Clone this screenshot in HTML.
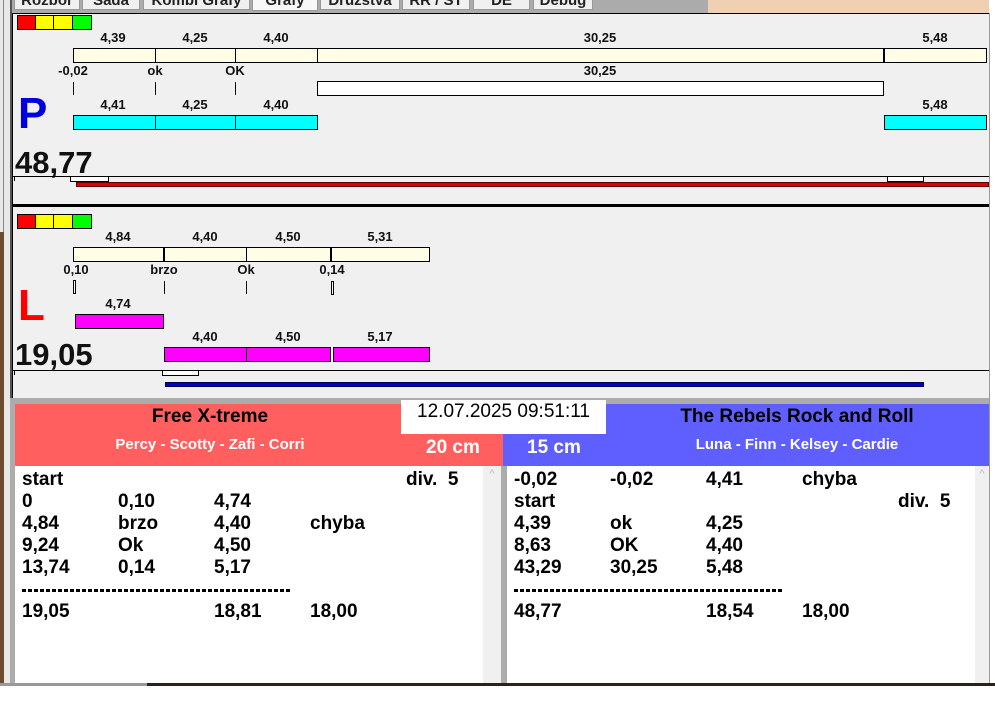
<!DOCTYPE html>
<html><head><meta charset="utf-8"><style>
*{margin:0;padding:0;box-sizing:border-box}
body{width:995px;height:701px;overflow:hidden;background:#fff;font-family:"Liberation Sans",Arial,sans-serif;position:relative}
div{position:absolute}
.t{font-weight:bold;font-size:13px;color:#111;white-space:nowrap;transform:translateX(-50%);line-height:14px}
.bar{border:1px solid #000;height:15px}
.cr{background:#fffde6}
.cy{background:#00ffff}
.mg{background:#ff00ff}
.tick{width:1px;height:13px;background:#000}
.tab{top:-2px;height:12px;background:#f0f0f0;border:1px solid #999;border-top:none;font-size:15px;font-weight:bold;line-height:6px;overflow:hidden;text-align:center;color:#222}
.row{font-size:19px;font-weight:bold;color:#000;line-height:22px;white-space:nowrap}
.dash{width:270px;height:3px;background:repeating-linear-gradient(90deg,#000 0 4px,transparent 4px 6px)}
</style></head><body>
<!-- left edge -->
<div style="left:0;top:0;width:12px;height:686px;background:#e8e8e8"></div>
<div style="left:3px;top:0;width:1px;height:686px;background:#888"></div>
<div style="left:10px;top:0;width:2px;height:400px;background:#555"></div>
<div style="left:0;top:232px;width:4px;height:451px;background:#6b4a30"></div>
<!-- tab strip -->
<div style="left:12px;top:0;width:696px;height:13px;background:#ababab"></div>
<div style="left:708px;top:0;width:281px;height:13px;background:#f0d0b2"></div>
<div class="tab" style="left:14px;width:66px">Rozbor</div>
<div class="tab" style="left:82px;width:58px">Sada</div>
<div class="tab" style="left:143px;width:107px">Kombi Grafy</div>
<div class="tab" style="left:252px;width:66px;height:13px;background:#f8f8f8">Grafy</div>
<div class="tab" style="left:320px;width:80px">Družstva</div>
<div class="tab" style="left:402px;width:68px">RR / ST</div>
<div class="tab" style="left:473px;width:57px">DE</div>
<div class="tab" style="left:533px;width:60px">Debug</div>
<!-- panel 1 -->
<div style="left:12px;top:13px;width:978px;height:385px;background:#f0f0f0;border-top:1px solid #000;border-right:1px solid #888"></div>
<div style="left:12px;top:13px;width:1px;height:385px;background:#000"></div>
<div style="left:17px;top:15px;width:19px;height:15px;background:#f00;border:1px solid #000"></div>
<div style="left:35px;top:15px;width:19px;height:15px;background:#ff0;border:1px solid #000"></div>
<div style="left:53px;top:15px;width:20px;height:15px;background:#ff0;border:1px solid #000"></div>
<div style="left:72px;top:15px;width:20px;height:15px;background:#0f0;border:1px solid #000"></div>

<div class="t" style="left:113px;top:31px">4,39</div>
<div class="t" style="left:195px;top:31px">4,25</div>
<div class="t" style="left:276px;top:31px">4,40</div>
<div class="t" style="left:600px;top:31px">30,25</div>
<div class="t" style="left:935px;top:31px">5,48</div>
<div class="bar cr" style="left:73px;top:48px;width:83px"></div>
<div class="bar cr" style="left:155px;top:48px;width:81px"></div>
<div class="bar cr" style="left:235px;top:48px;width:83px"></div>
<div class="bar cr" style="left:317px;top:48px;width:567px"></div>
<div style="left:883px;top:48px;width:2px;height:15px;background:#000"></div>
<div class="bar cr" style="left:884px;top:48px;width:103px"></div>
<div class="t" style="left:73px;top:64px">-0,02</div>
<div class="t" style="left:155px;top:64px">ok</div>
<div class="t" style="left:235px;top:64px">OK</div>
<div class="t" style="left:600px;top:64px">30,25</div>
<div class="tick" style="left:73px;top:82px"></div>
<div class="tick" style="left:155px;top:82px"></div>
<div class="tick" style="left:235px;top:82px"></div>
<div class="bar" style="left:317px;top:81px;width:567px;background:#fff"></div>
<div style="left:18px;top:89px;font-size:44px;font-weight:bold;color:#0000dd;line-height:50px">P</div>
<div class="t" style="left:113px;top:98px">4,41</div>
<div class="t" style="left:195px;top:98px">4,25</div>
<div class="t" style="left:276px;top:98px">4,40</div>
<div class="t" style="left:935px;top:98px">5,48</div>
<div class="bar cy" style="left:73px;top:115px;width:83px"></div>
<div class="bar cy" style="left:155px;top:115px;width:81px"></div>
<div class="bar cy" style="left:235px;top:115px;width:83px"></div>
<div class="bar cy" style="left:884px;top:115px;width:103px"></div>
<div style="left:15px;top:145px;font-size:31px;font-weight:bold;color:#111;line-height:36px">48,77</div>
<div style="left:13px;top:176px;width:976px;height:1px;background:#000"></div>
<div style="left:14px;top:177px;width:1px;height:4px;background:#000"></div>
<div style="left:70px;top:177px;width:39px;height:5px;background:#fff;border:1px solid #000;border-top:none"></div>
<div style="left:887px;top:177px;width:37px;height:5px;background:#fff;border:1px solid #000;border-top:none"></div>
<div style="left:76px;top:182px;width:913px;height:5px;background:#d00;border:1px solid #600"></div>
<div style="left:12px;top:204px;width:978px;height:3px;background:#000"></div>
<!-- panel 2 -->
<div style="left:17px;top:214px;width:19px;height:15px;background:#f00;border:1px solid #000"></div>
<div style="left:35px;top:214px;width:19px;height:15px;background:#ff0;border:1px solid #000"></div>
<div style="left:53px;top:214px;width:20px;height:15px;background:#ff0;border:1px solid #000"></div>
<div style="left:72px;top:214px;width:20px;height:15px;background:#0f0;border:1px solid #000"></div>
<div class="t" style="left:118px;top:230px">4,84</div>
<div class="t" style="left:205px;top:230px">4,40</div>
<div class="t" style="left:288px;top:230px">4,50</div>
<div class="t" style="left:380px;top:230px">5,31</div>
<div class="bar cr" style="left:73px;top:247px;width:92px"></div>
<div class="bar cr" style="left:163px;top:247px;width:84px"></div>
<div class="bar cr" style="left:246px;top:247px;width:85px"></div>
<div class="bar cr" style="left:330px;top:247px;width:100px"></div>
<div style="left:163px;top:247px;width:2px;height:15px;background:#000"></div>
<div style="left:330px;top:247px;width:2px;height:15px;background:#000"></div>
<div class="t" style="left:76px;top:263px">0,10</div>
<div class="t" style="left:164px;top:263px">brzo</div>
<div class="t" style="left:246px;top:263px">Ok</div>
<div class="t" style="left:332px;top:263px">0,14</div>
<div style="left:73px;top:280px;width:3px;height:14px;border:1px solid #000;background:#fff"></div>
<div class="tick" style="left:164px;top:281px"></div>
<div class="tick" style="left:246px;top:281px"></div>
<div style="left:331px;top:281px;width:3px;height:14px;border:1px solid #000;background:#fff"></div>
<div style="left:18px;top:281px;font-size:44px;font-weight:bold;color:#f00;line-height:50px">L</div>
<div class="t" style="left:118px;top:297px">4,74</div>
<div class="bar mg" style="left:75px;top:314px;width:89px"></div>
<div class="t" style="left:205px;top:330px">4,40</div>
<div class="t" style="left:288px;top:330px">4,50</div>
<div class="t" style="left:380px;top:330px">5,17</div>
<div class="bar mg" style="left:164px;top:347px;width:83px"></div>
<div class="bar mg" style="left:246px;top:347px;width:85px"></div>
<div class="bar mg" style="left:333px;top:347px;width:97px"></div>
<div style="left:15px;top:337px;font-size:31px;font-weight:bold;color:#111;line-height:36px">19,05</div>
<div style="left:13px;top:370px;width:976px;height:1px;background:#000"></div>
<div style="left:14px;top:371px;width:1px;height:4px;background:#000"></div>
<div style="left:162px;top:371px;width:37px;height:5px;background:#fff;border:1px solid #000;border-top:none"></div>
<div style="left:165px;top:382px;width:759px;height:5px;background:#0000cc;border:1px solid #000050"></div>
<!-- bottom -->
<div style="left:10px;top:398px;width:980px;height:288px;background:#acacac"></div>
<div style="left:15px;top:404px;width:488px;height:62px;background:#ff5f5f"></div>
<div style="left:503px;top:404px;width:486px;height:62px;background:#5f5fff"></div>
<div style="left:15px;top:406px;width:390px;text-align:center;font-size:19px;font-weight:bold;line-height:22px">Free X-treme</div>
<div style="left:15px;top:436px;width:390px;text-align:center;font-size:15px;font-weight:bold;color:#fff;line-height:18px">Percy - Scotty - Zafi - Corri</div>
<div style="left:605px;top:406px;width:384px;text-align:center;font-size:19px;font-weight:bold;line-height:22px">The Rebels Rock and Roll</div>
<div style="left:605px;top:436px;width:384px;text-align:center;font-size:15px;font-weight:bold;color:#fff;line-height:18px">Luna - Finn - Kelsey - Cardie</div>
<div style="left:401px;top:400px;width:205px;height:34px;background:#fff"></div>
<div style="left:401px;top:400px;width:205px;text-align:center;font-size:19px;line-height:24px;color:#000">12.07.2025 09:51:11</div>
<div style="left:426px;top:437px;font-size:19px;font-weight:bold;color:#fff;line-height:22px">20 cm</div>
<div style="left:527px;top:437px;font-size:19px;font-weight:bold;color:#fff;line-height:22px">15 cm</div>
<div style="left:15px;top:466px;width:468px;height:217px;background:#fff"></div>
<div style="left:483px;top:466px;width:18px;height:217px;background:#f0f0f0;color:#bbb;font-size:11px;text-align:center;line-height:16px">^</div>
<div style="left:507px;top:466px;width:468px;height:217px;background:#fff"></div>
<div style="left:975px;top:466px;width:14px;height:217px;background:#f0f0f0;color:#bbb;font-size:11px;text-align:center;line-height:16px">^</div>
<div style="left:989px;top:13px;width:6px;height:673px;background:#fff"></div>
<div style="left:989px;top:13px;width:1px;height:673px;background:#999"></div>
<div style="left:0;top:683px;width:147px;height:3px;background:#999"></div>
<div style="left:147px;top:683px;width:848px;height:3px;background:#2a2220"></div>
<div style="left:0;top:686px;width:995px;height:15px;background:#fff"></div>

<div class="row" style="left:22px;top:469px">start</div><div class="row" style="left:406px;top:469px">div.&nbsp; 5</div>
<div class="row" style="left:22px;top:491px">0</div><div class="row" style="left:118px;top:491px">0,10</div><div class="row" style="left:214px;top:491px">4,74</div>
<div class="row" style="left:22px;top:513px">4,84</div><div class="row" style="left:118px;top:513px">brzo</div><div class="row" style="left:214px;top:513px">4,40</div><div class="row" style="left:310px;top:513px">chyba</div>
<div class="row" style="left:22px;top:535px">9,24</div><div class="row" style="left:118px;top:535px">Ok</div><div class="row" style="left:214px;top:535px">4,50</div>
<div class="row" style="left:22px;top:557px">13,74</div><div class="row" style="left:118px;top:557px">0,14</div><div class="row" style="left:214px;top:557px">5,17</div>
<div class="dash" style="left:22px;top:589px"></div>
<div class="row" style="left:22px;top:601px">19,05</div><div class="row" style="left:214px;top:601px">18,81</div><div class="row" style="left:310px;top:601px">18,00</div>

<div class="row" style="left:514px;top:469px">-0,02</div><div class="row" style="left:610px;top:469px">-0,02</div><div class="row" style="left:706px;top:469px">4,41</div><div class="row" style="left:802px;top:469px">chyba</div>
<div class="row" style="left:514px;top:491px">start</div><div class="row" style="left:898px;top:491px">div.&nbsp; 5</div>
<div class="row" style="left:514px;top:513px">4,39</div><div class="row" style="left:610px;top:513px">ok</div><div class="row" style="left:706px;top:513px">4,25</div>
<div class="row" style="left:514px;top:535px">8,63</div><div class="row" style="left:610px;top:535px">OK</div><div class="row" style="left:706px;top:535px">4,40</div>
<div class="row" style="left:514px;top:557px">43,29</div><div class="row" style="left:610px;top:557px">30,25</div><div class="row" style="left:706px;top:557px">5,48</div>
<div class="dash" style="left:514px;top:589px"></div>
<div class="row" style="left:514px;top:601px">48,77</div><div class="row" style="left:706px;top:601px">18,54</div><div class="row" style="left:802px;top:601px">18,00</div>
</body></html>
